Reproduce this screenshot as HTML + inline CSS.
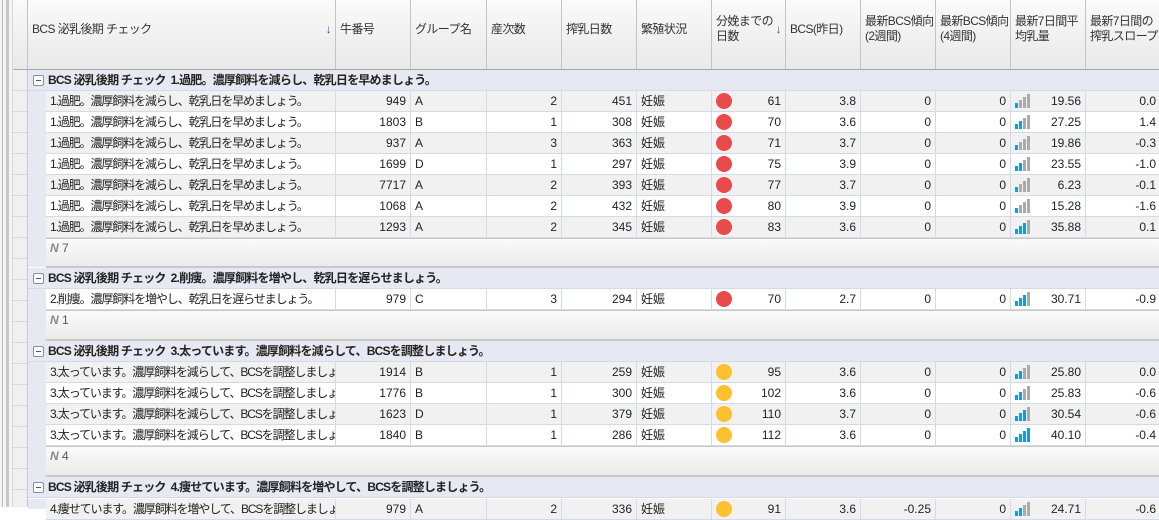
<!DOCTYPE html>
<html><head><meta charset="utf-8"><style>
*{margin:0;padding:0;box-sizing:border-box}
body{width:1159px;height:507px;overflow:hidden;background:#fff;font-family:"Liberation Sans","Noto Sans CJK JP",sans-serif;font-size:12px;color:#222;position:relative}
.a{position:absolute}
.hdr{top:0;left:28px;height:70px;width:1140px;background:linear-gradient(#fafafa,#e9e9e9);border-bottom:1px solid #a8a8a8}
.hc{position:absolute;top:0;height:69px;border-right:1px solid #c4c4c4;padding:6px 4px;color:#333;line-height:15px;font-size:12px;white-space:nowrap;letter-spacing:-0.6px;overflow:hidden}
.row{position:absolute;left:46px;height:21px;width:1120px;display:flex;border-bottom:1px solid #d3dae8}
.row div{height:20px;line-height:20px;border-right:1px solid #d3dae8;padding:0 4px;white-space:nowrap;overflow:hidden;position:relative}
.row div:first-child{letter-spacing:-1.1px}
.r{text-align:right}
.g{background:#f1f1f1}
.gh{position:absolute;left:28px;width:1140px;height:21px;background:#e6e8f2;font-weight:bold;line-height:21px;padding-left:20px;font-size:12px;color:#222;border-bottom:1px solid #d3dae8;letter-spacing:-0.8px}
.gh:before{content:"";position:absolute;left:5px;top:5px;width:9px;height:9px;border:1px solid #8a8fa0;border-radius:2px;background:#fff}
.gh:after{content:"";position:absolute;left:8px;top:10px;width:5px;height:1px;background:#555}
.ft{position:absolute;left:46px;width:1120px;background:linear-gradient(#fafafa,#ebebeb);border-bottom:2px solid #c8c8c8;border-top:1px solid #c8c8c8;padding:2px 4px;color:#555;font-size:12px}
.ft i{color:#888;font-weight:bold}
.ind{position:absolute;left:28px;width:18px;background:#e6e8f2}
.sel{position:absolute;left:13px;width:15px;top:70px;height:437px;background:repeating-linear-gradient(#f0f0f0 0,#f0f0f0 20px,#d8d8d8 20px,#d8d8d8 21px);border-right:1px solid #c8c8c8}
.dot{position:absolute;left:4px;top:2px;width:16px;height:16px;border-radius:50%}
.red{background:#e94b4b}.yel{background:#fdc02f}
.bars{position:absolute;left:4px;top:3px;width:16px;height:14px}
.bars i{position:absolute;bottom:0;width:3px}
</style></head><body>
<div class="a" style="left:0;top:0;width:13px;height:507px;background:#f4f4f4"></div>
<div class="a" style="left:2px;top:0;width:1px;height:507px;background:#bbb"></div>
<div class="a" style="left:6px;top:0;width:3px;height:507px;background:#c8c8c8"></div>
<div class="a" style="left:12px;top:0;width:1px;height:507px;background:#d8d8d8"></div>
<div class="a" style="left:13px;top:0;width:15px;height:70px;background:linear-gradient(#fafafa,#e9e9e9);border-right:1px solid #c4c4c4;border-bottom:1px solid #a8a8a8"></div>
<div class="sel"></div>
<div class="a hdr">
<div class="hc" style="left:0;width:308px;padding-top:22px">BCS 泌乳後期 チェック<span style="position:absolute;right:4px;color:#1f50c8;font-weight:bold">↓</span></div>
<div class="hc" style="left:308px;width:75px;padding-top:22px">牛番号</div>
<div class="hc" style="left:383px;width:76px;padding-top:22px">グループ名</div>
<div class="hc" style="left:459px;width:75px;padding-top:22px">産次数</div>
<div class="hc" style="left:534px;width:75px;padding-top:22px">搾乳日数</div>
<div class="hc" style="left:609px;width:75px;padding-top:22px">繁殖状況</div>
<div class="hc" style="left:684px;width:74px;padding-top:14px">分娩までの<br>日数<span style="position:absolute;right:4px;top:22px;color:#1f50c8;font-weight:bold">↓</span></div>
<div class="hc" style="left:758px;width:75px;padding-top:22px">BCS(昨日)</div>
<div class="hc" style="left:833px;width:75px;padding-top:14px">最新BCS傾向<br>(2週間)</div>
<div class="hc" style="left:908px;width:75px;padding-top:14px">最新BCS傾向<br>(4週間)</div>
<div class="hc" style="left:983px;width:75px;padding-top:14px">最新7日間平<br>均乳量</div>
<div class="hc" style="left:1058px;width:82px;padding-top:14px">最新7日間の<br>搾乳スロープ</div>
</div>

<div class="ind" style="top:91px;height:176px"></div>
<div class="ind" style="top:289px;height:52px"></div>
<div class="ind" style="top:362px;height:115px"></div>
<div class="ind" style="top:499px;height:10px"></div>

<div class="gh" style="top:70px">BCS 泌乳後期 チェック&nbsp; 1.過肥。濃厚飼料を減らし、乾乳日を早めましょう。</div>
<div class="gh" style="top:268px">BCS 泌乳後期 チェック&nbsp; 2.削痩。濃厚飼料を増やし、乾乳日を遅らせましょう。</div>
<div class="gh" style="top:341px">BCS 泌乳後期 チェック&nbsp; 3.太っています。濃厚飼料を減らして、BCSを調整しましょう。</div>
<div class="gh" style="top:477px">BCS 泌乳後期 チェック&nbsp; 4.痩せています。濃厚飼料を増やして、BCSを調整しましょう。</div>

<!-- group1 -->
<div class="row g" style="top:91px"><div style="width:290px">1.過肥。濃厚飼料を減らし、乾乳日を早めましょう。</div><div class="r" style="width:75px">949</div><div style="width:76px">A</div><div class="r" style="width:75px">2</div><div class="r" style="width:75px">451</div><div style="width:75px">妊娠</div><div class="r" style="width:74px"><span class="dot red"></span>61</div><div class="r" style="width:75px">3.8</div><div class="r" style="width:75px">0</div><div class="r" style="width:75px">0</div><div class="r" style="width:75px"><span class="bars"><i style="left:0;height:5px;background:#1a9ad6"></i><i style="left:4px;height:8px;background:#aaa"></i><i style="left:8px;height:11px;background:#aaa"></i><i style="left:12px;height:14px;background:#aaa"></i></span>19.56</div><div class="r" style="width:75px">0.0</div></div>
<div class="row" style="top:112px"><div style="width:290px">1.過肥。濃厚飼料を減らし、乾乳日を早めましょう。</div><div class="r" style="width:75px">1803</div><div style="width:76px">B</div><div class="r" style="width:75px">1</div><div class="r" style="width:75px">308</div><div style="width:75px">妊娠</div><div class="r" style="width:74px"><span class="dot red"></span>70</div><div class="r" style="width:75px">3.6</div><div class="r" style="width:75px">0</div><div class="r" style="width:75px">0</div><div class="r" style="width:75px"><span class="bars"><i style="left:0;height:5px;background:#1a9ad6"></i><i style="left:4px;height:8px;background:#1a9ad6"></i><i style="left:8px;height:11px;background:#aaa"></i><i style="left:12px;height:14px;background:#aaa"></i></span>27.25</div><div class="r" style="width:75px">1.4</div></div>
<div class="row g" style="top:133px"><div style="width:290px">1.過肥。濃厚飼料を減らし、乾乳日を早めましょう。</div><div class="r" style="width:75px">937</div><div style="width:76px">A</div><div class="r" style="width:75px">3</div><div class="r" style="width:75px">363</div><div style="width:75px">妊娠</div><div class="r" style="width:74px"><span class="dot red"></span>71</div><div class="r" style="width:75px">3.7</div><div class="r" style="width:75px">0</div><div class="r" style="width:75px">0</div><div class="r" style="width:75px"><span class="bars"><i style="left:0;height:5px;background:#1a9ad6"></i><i style="left:4px;height:8px;background:#aaa"></i><i style="left:8px;height:11px;background:#aaa"></i><i style="left:12px;height:14px;background:#aaa"></i></span>19.86</div><div class="r" style="width:75px">-0.3</div></div>
<div class="row" style="top:154px"><div style="width:290px">1.過肥。濃厚飼料を減らし、乾乳日を早めましょう。</div><div class="r" style="width:75px">1699</div><div style="width:76px">D</div><div class="r" style="width:75px">1</div><div class="r" style="width:75px">297</div><div style="width:75px">妊娠</div><div class="r" style="width:74px"><span class="dot red"></span>75</div><div class="r" style="width:75px">3.9</div><div class="r" style="width:75px">0</div><div class="r" style="width:75px">0</div><div class="r" style="width:75px"><span class="bars"><i style="left:0;height:5px;background:#1a9ad6"></i><i style="left:4px;height:8px;background:#1a9ad6"></i><i style="left:8px;height:11px;background:#aaa"></i><i style="left:12px;height:14px;background:#aaa"></i></span>23.55</div><div class="r" style="width:75px">-1.0</div></div>
<div class="row g" style="top:175px"><div style="width:290px">1.過肥。濃厚飼料を減らし、乾乳日を早めましょう。</div><div class="r" style="width:75px">7717</div><div style="width:76px">A</div><div class="r" style="width:75px">2</div><div class="r" style="width:75px">393</div><div style="width:75px">妊娠</div><div class="r" style="width:74px"><span class="dot red"></span>77</div><div class="r" style="width:75px">3.7</div><div class="r" style="width:75px">0</div><div class="r" style="width:75px">0</div><div class="r" style="width:75px"><span class="bars"><i style="left:0;height:5px;background:#1a9ad6"></i><i style="left:4px;height:8px;background:#aaa"></i><i style="left:8px;height:11px;background:#aaa"></i><i style="left:12px;height:14px;background:#aaa"></i></span>6.23</div><div class="r" style="width:75px">-0.1</div></div>
<div class="row" style="top:196px"><div style="width:290px">1.過肥。濃厚飼料を減らし、乾乳日を早めましょう。</div><div class="r" style="width:75px">1068</div><div style="width:76px">A</div><div class="r" style="width:75px">2</div><div class="r" style="width:75px">432</div><div style="width:75px">妊娠</div><div class="r" style="width:74px"><span class="dot red"></span>80</div><div class="r" style="width:75px">3.9</div><div class="r" style="width:75px">0</div><div class="r" style="width:75px">0</div><div class="r" style="width:75px"><span class="bars"><i style="left:0;height:5px;background:#1a9ad6"></i><i style="left:4px;height:8px;background:#aaa"></i><i style="left:8px;height:11px;background:#aaa"></i><i style="left:12px;height:14px;background:#aaa"></i></span>15.28</div><div class="r" style="width:75px">-1.6</div></div>
<div class="row g" style="top:217px"><div style="width:290px">1.過肥。濃厚飼料を減らし、乾乳日を早めましょう。</div><div class="r" style="width:75px">1293</div><div style="width:76px">A</div><div class="r" style="width:75px">2</div><div class="r" style="width:75px">345</div><div style="width:75px">妊娠</div><div class="r" style="width:74px"><span class="dot red"></span>83</div><div class="r" style="width:75px">3.6</div><div class="r" style="width:75px">0</div><div class="r" style="width:75px">0</div><div class="r" style="width:75px"><span class="bars"><i style="left:0;height:5px;background:#1a9ad6"></i><i style="left:4px;height:8px;background:#1a9ad6"></i><i style="left:8px;height:11px;background:#1a9ad6"></i><i style="left:12px;height:14px;background:#aaa"></i></span>35.88</div><div class="r" style="width:75px">0.1</div></div>
<div class="ft" style="top:238px;height:30px"><i>N</i> 7</div>

<!-- group2 -->
<div class="row" style="top:289px"><div style="width:290px">2.削痩。濃厚飼料を増やし、乾乳日を遅らせましょう。</div><div class="r" style="width:75px">979</div><div style="width:76px">C</div><div class="r" style="width:75px">3</div><div class="r" style="width:75px">294</div><div style="width:75px">妊娠</div><div class="r" style="width:74px"><span class="dot red"></span>70</div><div class="r" style="width:75px">2.7</div><div class="r" style="width:75px">0</div><div class="r" style="width:75px">0</div><div class="r" style="width:75px"><span class="bars"><i style="left:0;height:5px;background:#1a9ad6"></i><i style="left:4px;height:8px;background:#1a9ad6"></i><i style="left:8px;height:11px;background:#1a9ad6"></i><i style="left:12px;height:14px;background:#aaa"></i></span>30.71</div><div class="r" style="width:75px">-0.9</div></div>
<div class="ft" style="top:310px;height:31px"><i>N</i> 1</div>

<!-- group3 -->
<div class="row g" style="top:362px"><div style="width:290px">3.太っています。濃厚飼料を減らして、BCSを調整しましょう。</div><div class="r" style="width:75px">1914</div><div style="width:76px">B</div><div class="r" style="width:75px">1</div><div class="r" style="width:75px">259</div><div style="width:75px">妊娠</div><div class="r" style="width:74px"><span class="dot yel"></span>95</div><div class="r" style="width:75px">3.6</div><div class="r" style="width:75px">0</div><div class="r" style="width:75px">0</div><div class="r" style="width:75px"><span class="bars"><i style="left:0;height:5px;background:#1a9ad6"></i><i style="left:4px;height:8px;background:#1a9ad6"></i><i style="left:8px;height:11px;background:#aaa"></i><i style="left:12px;height:14px;background:#aaa"></i></span>25.80</div><div class="r" style="width:75px">0.0</div></div>
<div class="row" style="top:383px"><div style="width:290px">3.太っています。濃厚飼料を減らして、BCSを調整しましょう。</div><div class="r" style="width:75px">1776</div><div style="width:76px">B</div><div class="r" style="width:75px">1</div><div class="r" style="width:75px">300</div><div style="width:75px">妊娠</div><div class="r" style="width:74px"><span class="dot yel"></span>102</div><div class="r" style="width:75px">3.6</div><div class="r" style="width:75px">0</div><div class="r" style="width:75px">0</div><div class="r" style="width:75px"><span class="bars"><i style="left:0;height:5px;background:#1a9ad6"></i><i style="left:4px;height:8px;background:#1a9ad6"></i><i style="left:8px;height:11px;background:#aaa"></i><i style="left:12px;height:14px;background:#aaa"></i></span>25.83</div><div class="r" style="width:75px">-0.6</div></div>
<div class="row g" style="top:404px"><div style="width:290px">3.太っています。濃厚飼料を減らして、BCSを調整しましょう。</div><div class="r" style="width:75px">1623</div><div style="width:76px">D</div><div class="r" style="width:75px">1</div><div class="r" style="width:75px">379</div><div style="width:75px">妊娠</div><div class="r" style="width:74px"><span class="dot yel"></span>110</div><div class="r" style="width:75px">3.7</div><div class="r" style="width:75px">0</div><div class="r" style="width:75px">0</div><div class="r" style="width:75px"><span class="bars"><i style="left:0;height:5px;background:#1a9ad6"></i><i style="left:4px;height:8px;background:#1a9ad6"></i><i style="left:8px;height:11px;background:#1a9ad6"></i><i style="left:12px;height:14px;background:#aaa"></i></span>30.54</div><div class="r" style="width:75px">-0.6</div></div>
<div class="row" style="top:425px"><div style="width:290px">3.太っています。濃厚飼料を減らして、BCSを調整しましょう。</div><div class="r" style="width:75px">1840</div><div style="width:76px">B</div><div class="r" style="width:75px">1</div><div class="r" style="width:75px">286</div><div style="width:75px">妊娠</div><div class="r" style="width:74px"><span class="dot yel"></span>112</div><div class="r" style="width:75px">3.6</div><div class="r" style="width:75px">0</div><div class="r" style="width:75px">0</div><div class="r" style="width:75px"><span class="bars"><i style="left:0;height:5px;background:#1a9ad6"></i><i style="left:4px;height:8px;background:#1a9ad6"></i><i style="left:8px;height:11px;background:#1a9ad6"></i><i style="left:12px;height:14px;background:#1a9ad6"></i></span>40.10</div><div class="r" style="width:75px">-0.4</div></div>
<div class="ft" style="top:446px;height:31px"><i>N</i> 4</div>

<!-- group4 -->
<div class="row g" style="top:499px"><div style="width:290px">4.痩せています。濃厚飼料を増やして、BCSを調整しましょう。</div><div class="r" style="width:75px">979</div><div style="width:76px">A</div><div class="r" style="width:75px">2</div><div class="r" style="width:75px">336</div><div style="width:75px">妊娠</div><div class="r" style="width:74px"><span class="dot yel"></span>91</div><div class="r" style="width:75px">3.6</div><div class="r" style="width:75px">-0.25</div><div class="r" style="width:75px">0</div><div class="r" style="width:75px"><span class="bars"><i style="left:0;height:5px;background:#1a9ad6"></i><i style="left:4px;height:8px;background:#1a9ad6"></i><i style="left:8px;height:11px;background:#aaa"></i><i style="left:12px;height:14px;background:#aaa"></i></span>24.71</div><div class="r" style="width:75px">-0.6</div></div>
</body></html>
